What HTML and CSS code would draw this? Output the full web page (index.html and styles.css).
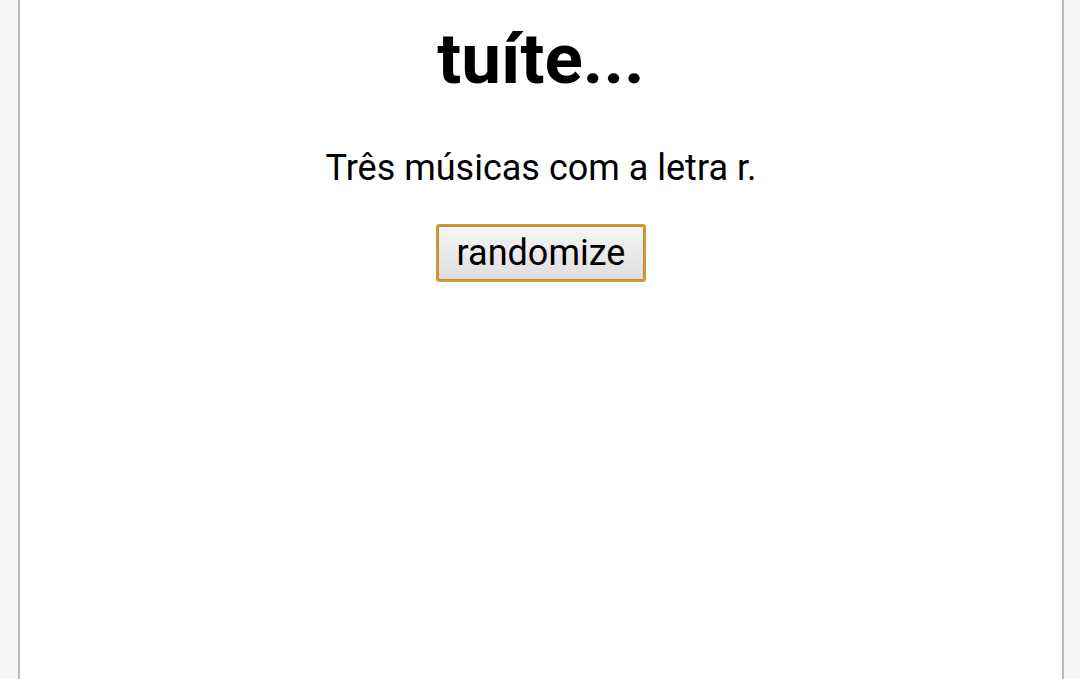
FILE: index.html
```html
<!DOCTYPE html>
<html lang="pt-BR">
  <head>
    <meta charset="UTF-8">
    <meta name="viewport" content="width=device-width, initial-scale=1.0">
    <title>tuíte...</title>
    <link rel="stylesheet" href="styles.css">
  </head>
  <body>
    <div class="content">
      <h1>tuíte...</h1>
      <p class="tweet" id="tweet">Três músicas com a letra r.</p>
      <button class="randomize" type="button" onclick="randomize()">randomize</button>
    </div>
    <script>
      function randomize() {
        let letters = "abcdefghijlmnoprstuv";
        let letter = letters[Math.floor(Math.random() * letters.length)];
        document.getElementById("tweet").textContent = "Três músicas com a letra " + letter + ".";
      }
    </script>
  </body>
</html>
```

FILE: styles.css
```css
* {
  box-sizing: border-box;
}
body {
  margin: 0;
  background-color: #f5f5f5;
  font-family: Roboto, sans-serif;
  font-size: 36px;
  text-align: center;
  color: #000;
}
.content {
  min-height: 100vh;
  margin: 0 16px 0 18px;
  padding-top: 16px;
  border: solid #bbb;
  border-width: 0 2px;
  background-color: #fff;
}
h1 {
  margin: 0;
  font-size: 71px;
  line-height: 86px;
}
.tweet {
  margin: 46px 0 36px;
  line-height: 40px;
}
.randomize {
  padding: 7px 19px;
  border: 2px solid #d8982a;
  border-radius: 3px;
  background: linear-gradient(#f6f6f6, #dedede);
  box-shadow: inset 0 0 0 1px #b08d50;
  font-family: inherit;
  font-size: 36px;
  line-height: 40px;
  color: #000;
  cursor: pointer;
}
```
